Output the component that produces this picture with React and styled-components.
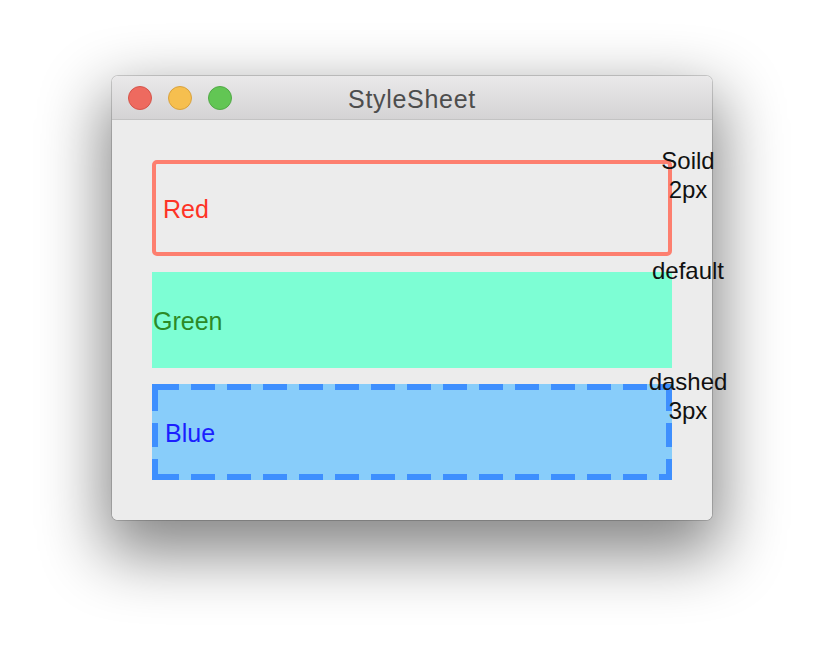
import React from "react";
import styled, { createGlobalStyle, css } from "styled-components";

const GlobalStyle = createGlobalStyle`
  html, body {
    margin: 0;
    padding: 0;
    background: #ffffff;
    font-family: "Liberation Sans", Arial, sans-serif;
  }
`;

const Stage = styled.div`
  width: 824px;
  height: 668px;
  box-sizing: border-box;
  padding: 76px 0 0 112px;
  overflow: hidden;
`;

const Window = styled.div`
  width: 600px;
  border-radius: 6px;
  box-shadow: 0 0 0 1px rgba(0, 0, 0, 0.16), 0 26px 64px 8px rgba(0, 0, 0, 0.48);
`;

const TitleBar = styled.div`
  height: 43px;
  border-bottom: 1px solid #c3c3c3;
  border-radius: 6px 6px 0 0;
  background: linear-gradient(to bottom, #eae9ea, #d4d3d4);
  display: grid;
  grid-template-columns: 1fr auto 1fr;
  align-items: center;
`;

const Lights = styled.div`
  display: flex;
  gap: 16px;
  padding-left: 16px;
`;

const lightColors = {
  close: ["#ee6a5f", "#d5544a"],
  min: ["#f6bf4f", "#d9a23e"],
  max: ["#62c654", "#52a947"],
};

const Light = styled.span`
  width: 22px;
  height: 22px;
  border-radius: 50%;
  background: ${(p) => lightColors[p.$kind][0]};
  border: 1px solid ${(p) => lightColors[p.$kind][1]};
`;

const Title = styled.div`
  font-size: 25px;
  letter-spacing: 0.7px;
  color: #4d4d4d;
  padding-top: 3px;
`;

const Content = styled.div`
  background: #ececec;
  border-radius: 0 0 6px 6px;
  padding: 40px;
  display: flex;
  flex-direction: column;
  gap: 16px;
`;

const Row = styled.div`
  position: relative;
`;

const BLUE_LINE = "#3e8ffe";
const dash = (dir) =>
  `repeating-linear-gradient(${dir}, ${BLUE_LINE} 0 24px, transparent 24px 36px)`;
const solid = `linear-gradient(${BLUE_LINE}, ${BLUE_LINE})`;

const variants = {
  red: css`
    border: 4px solid #fd7f6f;
    border-radius: 5px;
    padding-left: 7px;
    color: #fe3326;
  `,
  green: css`
    background: #7dfed4;
    padding-left: 1px;
    color: #2c8a27;
  `,
  blue: css`
    padding-left: 13px;
    color: #1b1fff;
    background:
      ${solid} 0 0 / 6px 6px no-repeat,
      ${solid} 100% 0 / 6px 6px no-repeat,
      ${solid} 0 100% / 6px 6px no-repeat,
      ${solid} 100% 100% / 6px 6px no-repeat,
      ${dash("90deg")} 3px 0 / 100% 6px no-repeat,
      ${dash("90deg")} 3px 100% / 100% 6px no-repeat,
      ${dash("180deg")} 0 3px / 6px 100% no-repeat,
      ${dash("180deg")} 100% 3px / 6px 100% no-repeat,
      #88cdfa;
  `,
};

const Box = styled.div`
  box-sizing: border-box;
  height: 96px;
  display: flex;
  align-items: center;
  padding-top: 2px;
  font-size: 25px;
  ${(p) => variants[p.$variant]}
`;

const Note = styled.div`
  position: absolute;
  top: ${(p) => p.$top}px;
  left: calc(100% + 16px);
  transform: translateX(-50%);
  text-align: center;
  white-space: nowrap;
  font-size: 24px;
  line-height: 29px;
  color: #111;
`;

const rows = [
  { variant: "red", text: "Red", note: ["Soild", "2px"], top: -14 },
  { variant: "green", text: "Green", note: ["default"], top: -16 },
  { variant: "blue", text: "Blue", note: ["dashed", "3px"], top: -17 },
];

export default function App() {
  return (
    <>
      <GlobalStyle />
      <Stage>
        <Window>
          <TitleBar>
            <Lights>
              <Light $kind="close" />
              <Light $kind="min" />
              <Light $kind="max" />
            </Lights>
            <Title>StyleSheet</Title>
            <span />
          </TitleBar>
          <Content>
            {rows.map((r) => (
              <Row key={r.variant}>
                <Box $variant={r.variant}>{r.text}</Box>
                <Note $top={r.top}>
                  {r.note.map((line) => (
                    <div key={line}>{line}</div>
                  ))}
                </Note>
              </Row>
            ))}
          </Content>
        </Window>
      </Stage>
    </>
  );
}
